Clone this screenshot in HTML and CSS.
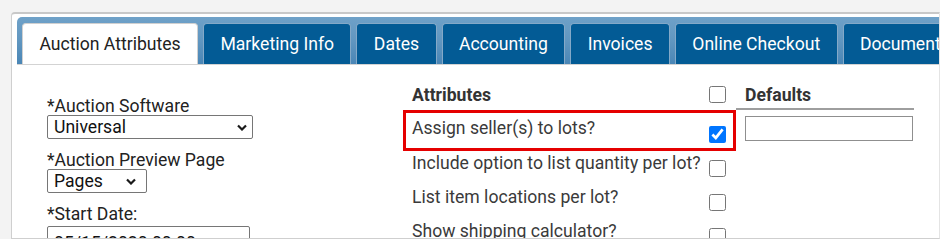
FILE: index.html
```html
<!DOCTYPE html>
<html>
	<head>
		<meta charset="utf-8">
		<link rel="stylesheet" href="styles.css">
	</head>
	<body>
		<div class="page">
			<div class="panel">
				<ul class="tabs">
					<li class="tab tab-active">Auction Attributes</li>
					<li class="tab">Marketing Info</li>
					<li class="tab">Dates</li>
					<li class="tab">Accounting</li>
					<li class="tab">Invoices</li>
					<li class="tab">Online Checkout</li>
					<li class="tab">Documents</li>
				</ul>

				<div class="content">
					<!-- left side: auction settings -->
					<div class="fields">
						<div class="field">
							<label class="field-label">*Auction Software</label>
							<div class="select-wrap select-wide">
								<select class="select"><option>Universal</option></select>
								<svg class="chevron" width="10" height="7" viewBox="0 0 10 7"><polyline points="1,1.5 5,5.5 9,1.5" fill="none" stroke="#1a1a1a" stroke-width="2.2"/></svg>
							</div>
						</div>
						<div class="field">
							<label class="field-label">*Auction Preview Page</label>
							<div class="select-wrap select-small">
								<select class="select"><option>Pages</option></select>
								<svg class="chevron" width="10" height="7" viewBox="0 0 10 7"><polyline points="1,1.5 5,5.5 9,1.5" fill="none" stroke="#1a1a1a" stroke-width="2.2"/></svg>
							</div>
						</div>
						<div class="field">
							<label class="field-label">*Start Date:</label>
							<input class="text-input date-input" type="text" value="05/15/2020 00:00">
						</div>
					</div>

					<!-- right side: attribute table -->
					<div class="attrs">
						<div class="attr-row attr-head">
							<div class="attr-name">Attributes</div>
							<div class="attr-check"><input type="checkbox" class="check"></div>
							<div class="attr-default">Defaults</div>
						</div>
						<div class="attr-row attr-first">
							<div class="highlight">
								<div class="attr-name">Assign seller(s) to lots?</div>
								<div class="attr-check"><input type="checkbox" class="check" checked></div>
							</div>
							<div class="attr-default"><input class="text-input default-input" type="text"></div>
						</div>
						<div class="attr-row">
							<div class="attr-name">Include option to list quantity per lot?</div>
							<div class="attr-check"><input type="checkbox" class="check"></div>
						</div>
						<div class="attr-row">
							<div class="attr-name">List item locations per lot?</div>
							<div class="attr-check"><input type="checkbox" class="check"></div>
						</div>
						<div class="attr-row">
							<div class="attr-name">Show shipping calculator?</div>
							<div class="attr-check"><input type="checkbox" class="check"></div>
						</div>
					</div>
				</div>
			</div>
		</div>
	</body>
</html>
```

FILE: styles.css
```css
body {
	margin: 0;
	background-color: #fff;
	font-family: Roboto, "Liberation Sans", sans-serif;
	font-size: 17.6px;
	color: #333;
}

.page {
	box-sizing: border-box;
	width: 940px;
	height: 239px;
	padding: 12px 0 0 11px;
	background-color: #f3f3f3;
}

.panel {
	box-sizing: border-box;
	height: 227px;
	padding: 3px 0 0 5px;
	background-color: #fff;
	border: 1px solid #cfcfcf;
	border-top: 2px solid #c8c8c8;
	border-right-color: #e4e4e4;
	border-radius: 4px 0 0 0;
	overflow: hidden;
}

/* tab strip */
.tabs {
	display: flex;
	gap: 5px;
	margin: 0;
	padding: 6px 0 0 5px;
	list-style: none;
	overflow: hidden;
	background: linear-gradient(to bottom, #6fa1c8 0%, #6398c1 45%, #4a86b6 100%);
	border-bottom: 1px solid #d3d3d3;
	border-radius: 5px 0 0 0;
}

.tab {
	flex-shrink: 0;
	height: 41px;
	padding: 10px 16.4px 0;
	box-sizing: border-box;
	line-height: 20px;
	color: #fff;
	background-color: #035b95;
	border: 1px solid #84a9c8;
	border-bottom: none;
	border-radius: 4px 4px 0 0;
	white-space: nowrap;
}

.tab-active {
	height: 42px;
	margin-bottom: -1px;
	color: #222;
	background-color: #fff;
	border-color: #d0d0d0;
}

.content {
	display: flex;
	padding-left: 30px;
}

/* left column */
.fields {
	width: 356px;
	padding-top: 32px;
}

.field {
	margin-bottom: 12px;
}

.field-label {
	display: block;
	line-height: 18px;
	color: #222;
}

.select-wrap {
	position: relative;
	height: 24px;
}

.select-wide {
	width: 206px;
}

.select-small {
	width: 100px;
}

.select {
	-webkit-appearance: none;
	appearance: none;
	box-sizing: border-box;
	width: 100%;
	height: 24px;
	margin: 0;
	padding: 0 0 0 6px;
	font-family: Roboto, "Liberation Sans", sans-serif;
	font-size: 17.6px;
	color: #111;
	background-color: #fff;
	border: 1px solid #767676;
	border-radius: 2px;
}

.chevron {
	position: absolute;
	top: 9px;
	right: 6px;
	pointer-events: none;
}

.select-small .chevron {
	right: 11px;
}

.text-input {
	box-sizing: border-box;
	margin: 0;
	padding: 0 6px;
	font-family: Roboto, "Liberation Sans", sans-serif;
	font-size: 17.6px;
	color: #111;
	background-color: #fff;
	border: 1px solid #8f8f8f;
	border-radius: 0;
}

.date-input {
	width: 203px;
	height: 30px;
	margin-top: 3px;
	padding-top: 3px;
	border-color: #767676;
	border-radius: 2px;
}

/* right column */
.attrs {
	padding-top: 12px;
}

.attr-row {
	display: flex;
	height: 34px;
	line-height: 20px;
}

.attr-name {
	box-sizing: border-box;
	width: 297px;
	padding: 2px 0 0 9px;
	white-space: nowrap;
	color: #3a3a3a;
}

.attr-check {
	box-sizing: border-box;
	width: 36px;
	padding: 9px 0 0 9px;
}

.check {
	display: block;
	width: 17px;
	height: 17px;
	margin: 0;
	accent-color: #0075ff;
}

.attr-default {
	box-sizing: border-box;
	width: 178px;
	padding-left: 9px;
}

.attr-head {
	height: 33px;
}

.attr-head .attr-name,
.attr-head .attr-default {
	padding-top: 8px;
	font-weight: bold;
	color: #333;
}

.attr-head .attr-default {
	border-bottom: 2px solid #9e9e9e;
}

.attr-first {
	height: 41px;
}

/* red marker round the first row */
.highlight {
	display: flex;
	box-sizing: border-box;
	width: 333px;
	height: 41px;
	border: 3px solid #e50000;
}

.highlight .attr-name {
	width: 294px;
	padding: 5px 0 0 6px;
}

.highlight .attr-check {
	width: 33px;
	padding-top: 13px;
}

.default-input {
	width: 168px;
	height: 25px;
	margin-top: 6px;
}
```
